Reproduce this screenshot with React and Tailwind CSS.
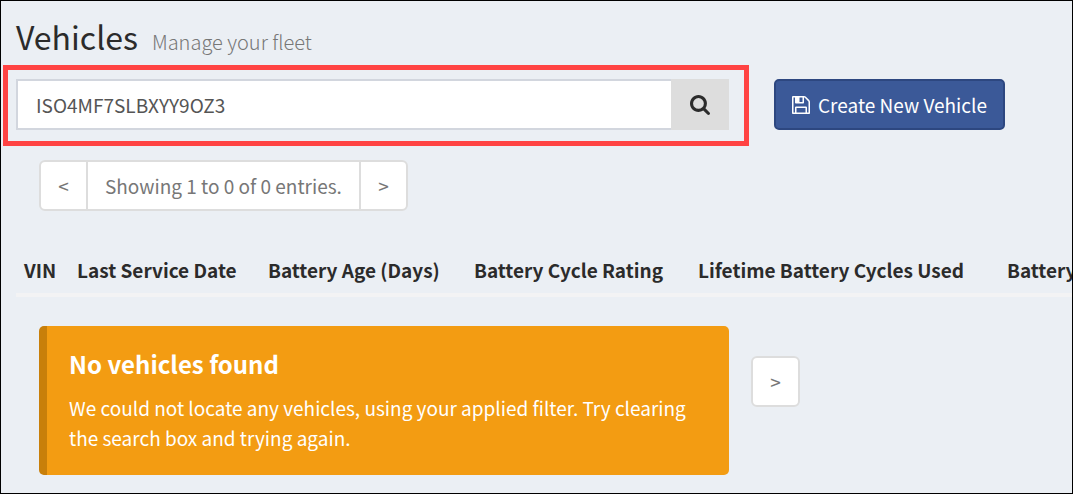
import { useState } from "react";

const columns = [
  { label: "VIN", width: "w-[53px]" },
  { label: "Last Service Date", width: "w-[191px]" },
  { label: "Battery Age (Days)", width: "w-[206px]" },
  { label: "Battery Cycle Rating", width: "w-[224px]" },
  { label: "Lifetime Battery Cycles Used", width: "w-[309px]" },
  { label: "Battery", width: "w-[191px]" },
];

function SearchIcon() {
  return (
    <svg viewBox="64 128 1664 1664" className="size-5" fill="currentColor" aria-hidden="true">
      <path d="M1216 832q0-185-131.5-316.5t-316.5-131.5-316.5 131.5-131.5 316.5 131.5 316.5 316.5 131.5 316.5-131.5 131.5-316.5zm512 832q0 52-38 90t-90 38q-54 0-90-38l-343-342q-179 124-399 124-143 0-273.5-55.5t-225-150-150-225-55.5-273.5 55.5-273.5 150-225 225-150 273.5-55.5 273.5 55.5 225 150 150 225 55.5 273.5q0 220-124 399l343 343q37 37 37 90z" />
    </svg>
  );
}

function SaveIcon() {
  return (
    <svg viewBox="128 128 1536 1536" className="size-[18px] shrink-0" fill="currentColor" aria-hidden="true">
      <path d="M512 1536h768v-384h-768v384zm896 0h128v-896q0-14-10-38.5t-20-34.5l-281-281q-10-10-34-20t-39-10v416q0 40-28 68t-68 28h-576q-40 0-68-28t-28-68v-416h-128v1280h128v-416q0-40 28-68t68-28h832q40 0 68 28t28 68v416zm-384-928v-320q0-13-9.5-22.5t-22.5-9.5h-192q-13 0-22.5 9.5t-9.5 22.5v320q0 13 9.5 22.5t22.5 9.5h192q13 0 22.5-9.5t9.5-22.5zm640 32v928q0 40-28 68t-68 28h-1344q-40 0-68-28t-28-68v-1344q0-40 28-68t68-28h928q40 0 88 20t76 48l280 280q28 28 48 76t20 88z" />
    </svg>
  );
}

export default function App() {
  const [query, setQuery] = useState("ISO4MF7SLBXYY9OZ3");

  return (
    <main className="min-h-screen overflow-hidden border border-black bg-[#ebeff4] font-['Noto_Sans_CJK_SC',sans-serif] text-[19px] leading-[30px] text-[#2b2b2b]">
      <header className="flex items-baseline gap-[14px] px-[15px] pt-[15px]">
        <h1 className="text-[32px] leading-10">Vehicles</h1>
        <small className="text-xl font-light text-[#777777]">Manage your fleet</small>
      </header>

      <div className="mt-[9px] flex items-start gap-[25px] pl-0.5">
        <form
          className="flex max-w-[746px] flex-1 border-5 border-[#ff4343] pt-[9px] pr-[15px] pb-[11px] pl-2"
          onSubmit={(e) => e.preventDefault()}
        >
          <input
            type="text"
            aria-label="Search vehicles"
            value={query}
            onChange={(e) => setQuery(e.target.value)}
            className="h-[51px] min-w-0 flex-1 border-2 border-r-0 border-[#d2d6de] bg-white px-[18px] text-[#555555] outline-none"
          />
          <button type="submit" aria-label="Search" className="flex w-[58px] items-center justify-center bg-[#dddddd] text-[#2b2b2b]">
            <SearchIcon />
          </button>
        </form>
        <button
          type="button"
          className="mt-3.5 flex h-[51px] items-center gap-2 rounded-[5px] border-2 border-[#2d4780] bg-[#3b5998] px-4 whitespace-nowrap text-white"
        >
          <SaveIcon />
          Create New Vehicle
        </button>
      </div>

      <nav aria-label="Pages" className="mt-3.5 ml-[38px] flex h-[51px] w-fit divide-x-2 divide-[#dddddd] rounded-md border-2 border-[#dddddd] bg-white text-[#777777]">
        <button type="button" className="w-[47px]">&lt;</button>
        <span className="flex items-center px-[17px] whitespace-nowrap">Showing 1 to 0 of 0 entries.</span>
        <button type="button" className="w-[45px]">&gt;</button>
      </nav>

      <div className="mt-[38px] ml-[15px] overflow-hidden">
        <table className="w-full min-w-[1174px] table-fixed border-b-4 border-[#f3f3f4]">
          <thead>
            <tr>
              {columns.map((column) => (
                <th key={column.label} scope="col" className={`${column.width} pt-1.5 pb-2 pl-2 text-left font-bold whitespace-nowrap`}>
                  {column.label}
                </th>
              ))}
            </tr>
          </thead>
        </table>
      </div>

      <div className="mt-[29px] mb-4 ml-[38px] flex gap-[22px]">
        <section role="alert" className="max-w-[690px] flex-1 rounded-[5px] border-l-8 border-[#c87f0a] bg-[#f39c12] py-[22px] pr-[30px] pl-[22px] text-white">
          <h2 className="mb-[13px] text-2xl leading-8 font-bold">No vehicles found</h2>
          <p>We could not locate any vehicles, using your applied filter. Try clearing the search box and trying again.</p>
        </section>
        <button type="button" aria-label="Next page" className="mt-[30px] h-[51px] w-[49px] rounded-md border-2 border-[#dddddd] bg-white text-[#777777]">
          &gt;
        </button>
      </div>
    </main>
  );
}
